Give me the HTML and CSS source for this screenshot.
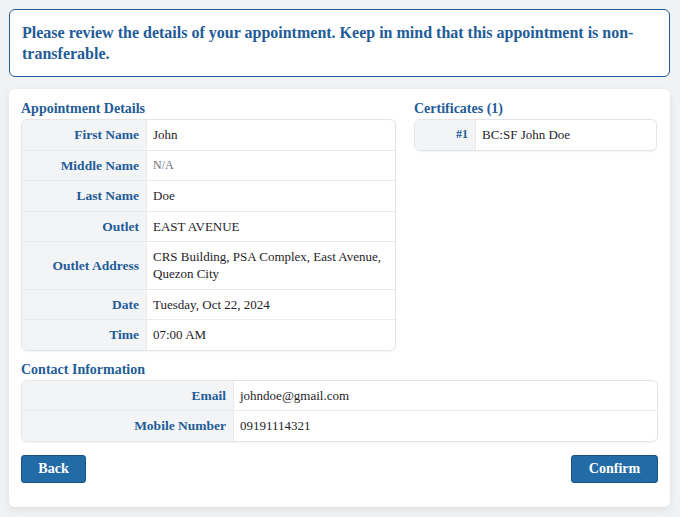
FILE: index.html
```html
<!DOCTYPE html>
<html lang="en">
<head>
<meta charset="utf-8">
<title>Review Appointment</title>
<link rel="stylesheet" href="styles.css">
</head>
<body>
<div class="page">
  <div class="alert">Please review the details of your appointment. Keep in mind that this appointment is non-transferable.</div>
  <div class="card">
    <div class="grid">
      <section class="appt">
        <h3 class="section-title">Appointment Details</h3>
        <table class="info info-appt">
          <tr><th>First Name</th><td>John</td></tr>
          <tr><th>Middle Name</th><td class="muted">N/A</td></tr>
          <tr><th>Last Name</th><td>Doe</td></tr>
          <tr><th>Outlet</th><td>EAST AVENUE</td></tr>
          <tr><th>Outlet Address</th><td>CRS Building, PSA Complex, East Avenue, Quezon City</td></tr>
          <tr><th>Date</th><td>Tuesday, Oct 22, 2024</td></tr>
          <tr><th>Time</th><td>07:00 AM</td></tr>
        </table>
      </section>
      <section class="certs">
        <h3 class="section-title">Certificates (1)</h3>
        <table class="info info-certs">
          <tr><th class="num">#1</th><td>BC:SF John Doe</td></tr>
        </table>
      </section>
    </div>
    <section class="contact">
      <h3 class="section-title">Contact Information</h3>
      <table class="info info-contact">
        <tr><th>Email</th><td>johndoe@gmail.com</td></tr>
        <tr><th>Mobile Number</th><td>09191114321</td></tr>
      </table>
    </section>
    <div class="actions">
      <button class="btn btn-back">Back</button>
      <button class="btn btn-confirm">Confirm</button>
    </div>
  </div>
</div>
</body>
</html>
```
FILE: styles.css
```css
* { box-sizing: border-box; }
html, body { margin: 0; padding: 0; }
body {
  background: #f1f2f4;
  font-family: "Liberation Serif", "DejaVu Serif", serif;
  color: #1f2328;
}
.page { padding: 9px 10px 10px 9px; }
.alert {
  background: #ffffff;
  border: 1.5px solid #245a97;
  border-radius: 6px;
  padding: 12px;
  color: #1f5c98;
  font-weight: bold;
  font-size: 16px;
  line-height: 21px;
}
.card {
  margin-top: 12px;
  background: #ffffff;
  border-radius: 6px;
  box-shadow: 0 3px 8px rgba(0,0,0,0.08);
  padding: 12px 12px 24px 12px;
}
.grid {
  display: grid;
  grid-template-columns: 375px 243px;
  column-gap: 18px;
}
.section-title {
  margin: 0 0 2px 0;
  font-size: 14px;
  line-height: 16px;
  font-weight: bold;
  color: #1f5c98;
}
.info {
  width: 100%;
  border-collapse: separate;
  border-spacing: 0;
  border: 1px solid #e3e5e9;
  border-radius: 6px;
  overflow: hidden;
  box-shadow: 0 1px 2px rgba(0,0,0,0.05);
  font-size: 13px;
  line-height: 17px;
}
.info th, .info td {
  padding: 6.25px 5px 6.25px 6px;
  border-bottom: 1px solid #e8eaee;
  vertical-align: middle;
}
.info tr:last-child th, .info tr:last-child td { border-bottom: none; }
.info th {
  background: #f3f4f6;
  color: #1f5c98;
  font-weight: bold;
  font-size: 13.5px;
  text-align: right;
  border-right: 1px solid #e8eaee;
  padding-right: 7px;
}
.info td { color: #1f2328; text-align: left; }
.info td.muted { color: #6b7280; font-size: 12px; }
.info-appt th { width: 125px; }
.info-certs th { width: 61px; }
.info-certs th.num { font-size: 12px; }
.info-contact th { width: 212px; }
.contact { margin-top: 11px; }
.actions {
  margin-top: 13px;
  display: flex;
  justify-content: space-between;
}
.btn {
  font-family: inherit;
  font-size: 14px;
  font-weight: bold;
  color: #ffffff;
  background: #236ba6;
  border: 1px solid #1b5283;
  border-radius: 3px;
  height: 28px;
  padding: 0;
}
.btn-back { width: 65px; }
.btn-confirm { width: 87px; }
```
